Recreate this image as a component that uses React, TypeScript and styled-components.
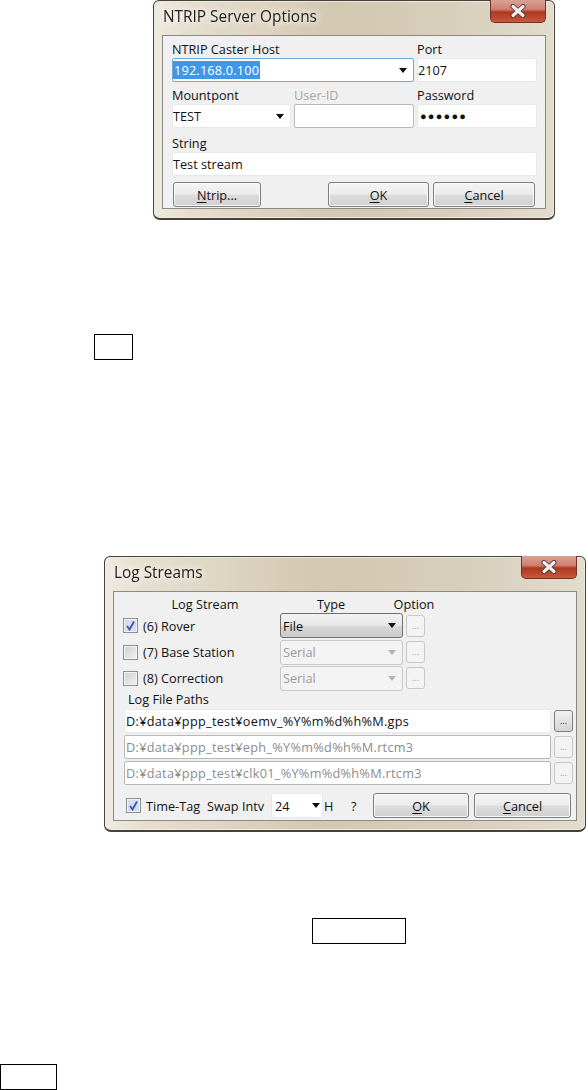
import styled, { createGlobalStyle } from 'styled-components';

const Global = createGlobalStyle`
    html, body {
        margin: 0;
        background: #fff;
    }
    body {
        font-family: "Open Sans", "Noto Sans", sans-serif;
        font-size: 12.7px;
        color: #111;
    }
`;

const Page = styled.div`
    width: 588px;
    height: 1090px;
    overflow: hidden;
    display: flex;
    flex-direction: column;
    align-items: flex-start;
`;

const Dialog = styled.div<{ $left: number; $width: number; $height: number; $top: number }>`
    box-sizing: border-box;
    margin-left: ${(p) => p.$left}px;
    margin-top: ${(p) => p.$top}px;
    width: ${(p) => p.$width}px;
    height: ${(p) => p.$height}px;
    padding: 0 8px 9px;
    display: flex;
    flex-direction: column;
    border: 1px solid #45423c;
    border-bottom-width: 2px;
    border-radius: 6px 6px 7px 7px;
    background: linear-gradient(90deg, #efeae0 0, #e6dfd0 8%, #d3c8b0 45%, #d8cfbb 75%, #e2dccd 100%);
    box-shadow: inset 0 0 0 1px #f1ece1;
    filter: blur(0.3px);
`;

const TitleBar = styled.div`
    height: 34px;
    flex: none;
    display: flex;
    justify-content: space-between;
    align-items: flex-start;
`;

const Title = styled.div`
    font-size: 15.4px;
    line-height: 20px;
    margin-top: 6px;
    padding-left: 1px;
    color: #23211d;
    text-shadow: 0 0 8px #fff, 0 0 8px #fff;
`;

const CloseButton = styled.div`
    width: 56px;
    height: 23px;
    margin-top: -1px;
    box-sizing: border-box;
    border: 1px solid #6f3228;
    border-top: none;
    border-radius: 0 0 5px 5px;
    background: linear-gradient(180deg, #d9a193 0, #cf8070 42%, #ad3820 55%, #c9583c 100%);
    display: flex;
    align-items: center;
    justify-content: center;
    svg {
        display: block;
    }
`;

const Panel = styled.div`
    flex: 1;
    box-sizing: border-box;
    border: 1px solid #8a8a86;
    background: #f0f0f0;
`;

const ServerGrid = styled.div`
    display: grid;
    grid-template-columns: 119px 120px 120px;
    column-gap: 3px;
    padding: 0 0 0 9px;
`;

const FieldLabel = styled.div<{ $muted?: boolean; $pad?: number }>`
    box-sizing: border-box;
    height: ${(p) => (p.$pad ? 24 : 22)}px;
    padding-bottom: 1px;
    display: flex;
    align-items: flex-end;
    line-height: 16px;
    color: ${(p) => (p.$muted ? '#a8a8a8' : '#111')};
`;

const Wide = styled.div`
    grid-column: span 2;
`;

const Full = styled.div`
    grid-column: span 3;
`;

const Input = styled.div<{ $focus?: boolean; $boxed?: boolean; $muted?: boolean }>`
    box-sizing: border-box;
    height: 24px;
    display: flex;
    align-items: center;
    justify-content: space-between;
    padding: 0 6px 0 0;
    background: #fff;
    white-space: nowrap;
    color: ${(p) => (p.$muted ? '#8c8c8c' : '#111')};
    border: 1px solid ${(p) => (p.$focus ? '#6fa9d8' : p.$boxed ? '#b8b8b8' : '#e4e9ee')};
    border-radius: 2px;
`;

const Selected = styled.span`
    background: #3f97e8;
    color: #fff;
    padding: 0 1px;
    letter-spacing: 0.2px;
`;

const Dots = styled.span`
    font-size: 11px;
    letter-spacing: 1.2px;
    line-height: 12px;
    padding-left: 2px;
`;

const Arrow = styled.span<{ $muted?: boolean }>`
    flex: none;
    width: 0;
    height: 0;
    border-left: 4.5px solid transparent;
    border-right: 4.5px solid transparent;
    border-top: 5px solid ${(p) => (p.$muted ? '#b4b4b4' : '#111')};
`;

const ButtonRow = styled.div`
    display: flex;
    padding: 6px 0 0 10px;
    gap: 4px;
`;

const Button = styled.div<{ $w: number; $after?: number }>`
    box-sizing: border-box;
    flex: none;
    width: ${(p) => p.$w}px;
    height: 25px;
    margin-right: ${(p) => p.$after ?? 0}px;
    display: flex;
    align-items: center;
    justify-content: center;
    border: 1px solid #7e7e7e;
    border-radius: 3px;
    background: linear-gradient(180deg, #f4f4f4 0, #ececec 48%, #dcdcdc 52%, #d0d0d0 100%);
    box-shadow: inset 0 0 0 1px #f8f8f8;
    u {
        text-underline-offset: 2px;
    }
`;

const LogPanelBody = styled.div`
    padding: 4px 0 0 9px;
    display: flex;
    flex-direction: column;
`;

const HeaderRow = styled.div`
    display: flex;
    height: 17px;
    line-height: 16px;
`;

const HeaderCell = styled.div<{ $w: number; $left?: number }>`
    width: ${(p) => p.$w}px;
    margin-left: ${(p) => p.$left ?? 0}px;
    text-align: center;
    flex: none;
`;

const StreamRow = styled.div`
    display: flex;
    align-items: center;
    height: 26.3px;
`;

const CheckLabel = styled.div<{ $w: number }>`
    display: flex;
    align-items: center;
    gap: 5px;
    width: ${(p) => p.$w}px;
    flex: none;
    white-space: nowrap;
`;

const CheckBox = styled.span<{ $checked?: boolean }>`
    box-sizing: border-box;
    flex: none;
    width: 15px;
    height: 15px;
    border: 1px solid #8e8f8f;
    background: ${(p) => (p.$checked ? '#d5def0' : 'linear-gradient(135deg, #cfcfcf, #f2f2f2)')};
    box-shadow: inset 0 0 0 1px #f2f2f2;
    display: flex;
    align-items: center;
    justify-content: center;
    svg {
        display: block;
    }
`;

const Select = styled.div<{ $active?: boolean }>`
    box-sizing: border-box;
    flex: none;
    width: 123px;
    height: 25px;
    padding: 0 6px 0 2px;
    display: flex;
    align-items: center;
    justify-content: space-between;
    border-radius: 3px;
    border: 1px solid ${(p) => (p.$active ? '#6f6f6f' : '#c8c8c8')};
    color: ${(p) => (p.$active ? '#111' : '#9b9b9b')};
    background: ${(p) => (p.$active ? 'linear-gradient(180deg, #f2f2f2 0, #e8e8e8 48%, #d6d6d6 55%, #cbcbcb 100%)' : '#f3f3f3')};
`;

const MoreButton = styled.div<{ $active?: boolean }>`
    box-sizing: border-box;
    flex: none;
    width: 19px;
    height: 22px;
    margin-left: 3px;
    display: flex;
    align-items: center;
    justify-content: center;
    font-size: 9px;
    line-height: 10px;
    color: ${(p) => (p.$active ? '#222' : '#a0a0a0')};
    border: 1px solid ${(p) => (p.$active ? '#7e7e7e' : '#c8c8c8')};
    border-radius: 3px;
    background: ${(p) => (p.$active ? 'linear-gradient(180deg, #f2f2f2, #d4d4d4)' : '#f3f3f3')};
`;

const PathsLabel = styled.div`
    height: 17px;
    line-height: 16px;
    padding-left: 5px;
`;

const PathRow = styled.div`
    display: flex;
    align-items: center;
    height: 26px;
    padding-left: 1px;
    width: 449px;
    justify-content: space-between;
`;

const PathInput = styled(Input)`
    flex: 1;
    padding-left: 1px;
    letter-spacing: 0.3px;
`;

const BottomRow = styled.div`
    display: flex;
    align-items: center;
    margin-top: 7px;
    padding-left: 3px;
    white-space: nowrap;
`;

const SwapLabel = styled.span`
    margin-left: 8px;
    margin-right: 6px;
    width: 58px;
    flex: none;
`;

const SwapSelect = styled(Input)`
    width: 52px;
    height: 25px;
    flex: none;
    padding: 0 2px 0 3px;
`;

const Suffix = styled.span<{ $w: number }>`
    flex: none;
    width: ${(p) => p.$w}px;
    padding-left: 1px;
    box-sizing: border-box;
`;

const Outline = styled.div<{ $left: number; $top: number; $w: number }>`
    box-sizing: border-box;
    flex: none;
    margin-left: ${(p) => p.$left}px;
    margin-top: ${(p) => p.$top}px;
    width: ${(p) => p.$w}px;
    height: 26px;
    border: 1px solid #000;
`;

function Close() {
    return (
        <CloseButton>
            <svg width="16" height="14" viewBox="0 0 16 14">
                <path d="M3 2.5 L13 11.5 M13 2.5 L3 11.5" stroke="#4a3a38" strokeWidth="5" strokeLinecap="round" />
                <path d="M3 2.5 L13 11.5 M13 2.5 L3 11.5" stroke="#f1eeec" strokeWidth="3.2" strokeLinecap="round" />
            </svg>
        </CloseButton>
    );
}

function Check({ checked }: { checked?: boolean }) {
    return (
        <CheckBox $checked={checked}>
            {checked && (
                <svg width="11" height="11" viewBox="0 0 11 11">
                    <path d="M2 6 L4.5 9.5 L9 1.5" fill="none" stroke="#3d55a8" strokeWidth="1.8" />
                </svg>
            )}
        </CheckBox>
    );
}

function ServerOptions() {
    return (
        <Dialog $left={153} $top={0} $width={402} $height={220}>
            <TitleBar>
                <Title>NTRIP Server Options</Title>
                <Close />
            </TitleBar>
            <Panel>
                <ServerGrid>
                    <Wide>
                        <FieldLabel>NTRIP Caster Host</FieldLabel>
                        <Input $focus><Selected>192.168.0.100</Selected><Arrow /></Input>
                    </Wide>
                    <div>
                        <FieldLabel>Port</FieldLabel>
                        <Input>2107</Input>
                    </div>
                    <div>
                        <FieldLabel>Mountpont</FieldLabel>
                        <Input>TEST<Arrow /></Input>
                    </div>
                    <div>
                        <FieldLabel $muted>User-ID</FieldLabel>
                        <Input $boxed />
                    </div>
                    <div>
                        <FieldLabel>Password</FieldLabel>
                        <Input><Dots>●●●●●●</Dots></Input>
                    </div>
                    <Full>
                        <FieldLabel $pad={1}>String</FieldLabel>
                        <Input>Test stream</Input>
                    </Full>
                </ServerGrid>
                <ButtonRow>
                    <Button $w={88} $after={63}><span><u>N</u>trip...</span></Button>
                    <Button $w={101}><span><u>O</u>K</span></Button>
                    <Button $w={102}><span><u>C</u>ancel</span></Button>
                </ButtonRow>
            </Panel>
        </Dialog>
    );
}

const streams = [
    { name: '(6) Rover', checked: true, type: 'File', active: true },
    { name: '(7) Base Station', checked: false, type: 'Serial', active: false },
    { name: '(8) Correction', checked: false, type: 'Serial', active: false },
];

const paths = [
    { value: 'D:¥data¥ppp_test¥oemv_%Y%m%d%h%M.gps', active: true },
    { value: 'D:¥data¥ppp_test¥eph_%Y%m%d%h%M.rtcm3', active: false },
    { value: 'D:¥data¥ppp_test¥clk01_%Y%m%d%h%M.rtcm3', active: false },
];

function LogStreams() {
    return (
        <Dialog $left={104} $top={196} $width={482} $height={277}>
            <TitleBar>
                <Title>Log Streams</Title>
                <Close />
            </TitleBar>
            <Panel>
                <LogPanelBody>
                    <HeaderRow>
                        <HeaderCell $w={100} $left={32}>Log Stream</HeaderCell>
                        <HeaderCell $w={50} $left={51}>Type</HeaderCell>
                        <HeaderCell $w={50} $left={33}>Option</HeaderCell>
                    </HeaderRow>
                    {streams.map((s) => (
                        <StreamRow key={s.name}>
                            <CheckLabel $w={157}><Check checked={s.checked} />{s.name}</CheckLabel>
                            <Select $active={s.active}>{s.type}<Arrow $muted={!s.active} /></Select>
                            <MoreButton>...</MoreButton>
                        </StreamRow>
                    ))}
                    <PathsLabel>Log File Paths</PathsLabel>
                    {paths.map((p) => (
                        <PathRow key={p.value}>
                            <PathInput $boxed={!p.active} $muted={!p.active}>{p.value}</PathInput>
                            <MoreButton $active={p.active}>...</MoreButton>
                        </PathRow>
                    ))}
                    <BottomRow>
                        <CheckLabel $w={73}><Check checked />Time-Tag</CheckLabel>
                        <SwapLabel>Swap Intv</SwapLabel>
                        <SwapSelect>24<Arrow /></SwapSelect>
                        <Suffix $w={27}>H</Suffix>
                        <Suffix $w={23}>?</Suffix>
                        <Button $w={96} $after={5}><span><u>O</u>K</span></Button>
                        <Button $w={97}><span><u>C</u>ancel</span></Button>
                    </BottomRow>
                </LogPanelBody>
            </Panel>
        </Dialog>
    );
}

export default function App() {
    return (
        <>
            <Global />
            <Page>
                <ServerOptions />
                <Outline $left={94} $top={114} $w={39} />
                <LogStreams />
                <Outline $left={312} $top={86} $w={94} />
                <Outline $left={0} $top={120} $w={57} />
            </Page>
        </>
    );
}
